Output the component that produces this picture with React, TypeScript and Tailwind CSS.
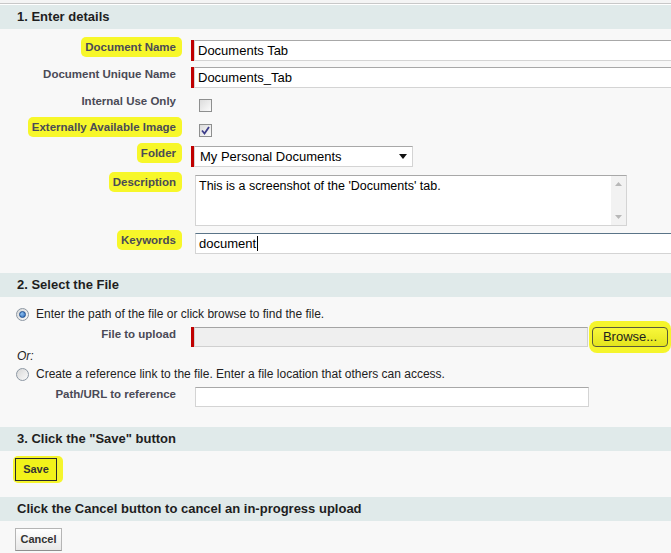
import React from "react";

const Hl = ({ children }: { children: React.ReactNode }) => (
  <span className="-mr-[6px] rounded-[5px] bg-[#f7f72a] py-[4px] pr-[6px] pl-[4px]">{children}</span>
);

const Label = ({ text, hl = false }: { text: string; hl?: boolean }) => (
  <div className="w-[176px] shrink-0 text-right text-[11.5px] font-bold leading-[14px] text-[#4a4a56]">
    {hl ? <Hl>{text}</Hl> : text}
  </div>
);

const Req = () => <div className="h-[21px] w-[3px] shrink-0 bg-[#c00000]" />;

const SectionHeader = ({ title }: { title: string }) => (
  <div className="h-[24px] bg-[#e0eaea] px-[17px] text-[13px] font-bold leading-[24px] text-[#1e1e1e]">
    {title}
  </div>
);

const TextInput = ({ value, w, caret = false, focused = false }: { value: string; w: string; caret?: boolean; focused?: boolean }) => (
  <div
    className={`flex h-[21px] shrink-0 items-center border border-[#d4d4d4] bg-white px-[3px] text-[13px] text-black ${
      focused ? "border-t-[#5a7488]" : "border-t-[#a8a8a8]"
    } ${w}`}
  >
    {value}
    {caret && <span className="ml-[1px] inline-block h-[15px] w-[1px] bg-black" />}
  </div>
);

const Checkbox = ({ checked = false }: { checked?: boolean }) => (
  <div className="flex h-[13px] w-[13px] items-center justify-center border border-[#8e8f8f] bg-gradient-to-br from-[#dcdcdc] to-[#fbfbfb]">
    {checked && (
      <svg width="9" height="9" viewBox="0 0 9 9">
        <path d="M1 4.5 L3.5 7.5 L8 1" fill="none" stroke="#3d3d8a" strokeWidth="1.8" />
      </svg>
    )}
  </div>
);

const Radio = ({ on = false }: { on?: boolean }) => (
  <div className="flex h-[13px] w-[13px] shrink-0 items-center justify-center rounded-full border border-[#8c97a3] bg-gradient-to-br from-[#d8d8d8] to-[#fafafa]">
    {on && <div className="h-[7px] w-[7px] rounded-full border border-[#1d4f8f] bg-[radial-gradient(circle_at_35%_35%,#8cc0f0,#2a66b8)]" />}
  </div>
);

export default function App() {
  return (
    <div className="h-[553px] w-[671px] overflow-hidden bg-[#f8f8f8] font-['Liberation_Sans',Arial,sans-serif]">
      <div className="h-[3px] bg-[#f4f4f4]" />
      <div className="h-[1px] bg-[#c8c8c8]" />
      <div className="h-[1px] bg-white" />
      <SectionHeader title="1. Enter details" />

      <div className="pt-[11px] pb-[19px]">
        <div className="flex items-start">
          <Label text="Document Name" hl />
          <div className="ml-[15px] flex">
            <Req />
            <TextInput value="Documents Tab" w="w-[480px]" />
          </div>
        </div>
        <div className="mt-[6px] flex items-start">
          <Label text="Document Unique Name" />
          <div className="ml-[15px] flex">
            <Req />
            <TextInput value="Documents_Tab" w="w-[480px]" />
          </div>
        </div>
        <div className="mt-[6px] flex items-start">
          <Label text="Internal Use Only" />
          <div className="mt-[5px] ml-[23px]">
            <Checkbox />
          </div>
        </div>
        <div className="mt-[8px] flex items-start">
          <Label text="Externally Available Image" hl />
          <div className="mt-[4px] ml-[23px]">
            <Checkbox checked />
          </div>
        </div>
        <div className="mt-[9px] flex items-start">
          <Label text="Folder" hl />
          <div className="ml-[15px] flex">
            <Req />
            <div className="flex h-[21px] w-[219px] items-center justify-between border border-[#d4d4d4] border-t-[#a8a8a8] bg-white pr-[5px] pl-[5px] text-[13px] text-black">
              <span>My Personal Documents</span>
              <svg width="8" height="5" viewBox="0 0 8 5">
                <path d="M0 0 L8 0 L4 5 Z" fill="#111" />
              </svg>
            </div>
          </div>
        </div>
        <div className="mt-[8px] flex items-start">
          <Label text="Description" hl />
          <div className="ml-[19px] flex h-[51px] w-[432px] border border-[#d4d4d4] border-t-[#a8a8a8] bg-white">
            <div className="flex-1 px-[3px] pt-[3px] text-[12.5px] leading-[15px] text-black">
              This is a screenshot of the 'Documents' tab.
            </div>
            <div className="flex w-[15px] flex-col items-center justify-between bg-[#f2f2f2] py-[6px]">
              <svg width="7" height="4" viewBox="0 0 7 4">
                <path d="M0 4 L7 4 L3.5 0 Z" fill="#b8b8b8" />
              </svg>
              <svg width="7" height="4" viewBox="0 0 7 4">
                <path d="M0 0 L7 0 L3.5 4 Z" fill="#b8b8b8" />
              </svg>
            </div>
          </div>
        </div>
        <div className="mt-[7px] flex items-start">
          <Label text="Keywords" hl />
          <div className="ml-[19px]">
            <TextInput value="document" w="w-[480px]" caret focused />
          </div>
        </div>
      </div>

      <SectionHeader title="2. Select the File" />
      <div className="pt-[10px] pb-[20px] text-[12px] text-[#222]">
        <div className="flex h-[14px] items-center pl-[16px]">
          <Radio on />
          <span className="ml-[7px]">Enter the path of the file or click browse to find the file.</span>
        </div>
        <div className="mt-[6px] flex items-start">
          <Label text="File to upload" />
          <div className="ml-[15px] flex items-start">
            <div className="h-[20px] w-[3px] bg-[#c00000]" />
            <div className="h-[20px] w-[394px] border border-[#d0d0d0] border-t-[#a4a4a4] bg-[#efefef]" />
            <div className="-my-[6px] ml-[1px] rounded-[8px] bg-[#f5f52c] px-[3px] py-[6px]">
              <div className="flex h-[20px] w-[76px] items-center justify-center rounded-[4px] border border-[#5a5a3a] bg-gradient-to-b from-[#f8f83a] to-[#e4e41c] text-[13px] text-[#1e1e1e]">
                Browse...
              </div>
            </div>
          </div>
        </div>
        <div className="mt-[2px] pl-[17px] leading-[14px] italic">Or:</div>
        <div className="mt-[4px] flex h-[14px] items-center pl-[16px]">
          <Radio />
          <span className="ml-[7px]">Create a reference link to the file. Enter a file location that others can access.</span>
        </div>
        <div className="mt-[6px] flex items-start">
          <Label text="Path/URL to reference" />
          <div className="ml-[19px] h-[20px] w-[394px] border border-[#d4d4d4] border-t-[#a8a8a8] bg-white" />
        </div>
      </div>

      <SectionHeader title={'3. Click the "Save" button'} />
      <div className="h-[46px] pt-[7px] pl-[15px]">
        <div className="-m-[2px] w-fit rounded-[5px] bg-[#f5f52c] p-[2px] pr-[6px]">
          <div className="flex h-[23px] w-[42px] items-center justify-center border border-[#2a2a2a] bg-[#f2f21a] text-[11px] font-bold text-[#333]">
            Save
          </div>
        </div>
      </div>

      <SectionHeader title="Click the Cancel button to cancel an in-progress upload" />
      <div className="pt-[7px] pl-[15px]">
        <div className="flex h-[23px] w-[47px] items-center justify-center border border-[#b5b5b5] border-b-[#8f8f8f] bg-gradient-to-b from-white to-[#e8e8e8] text-[11px] font-bold text-[#333]">
          Cancel
        </div>
      </div>
    </div>
  );
}
